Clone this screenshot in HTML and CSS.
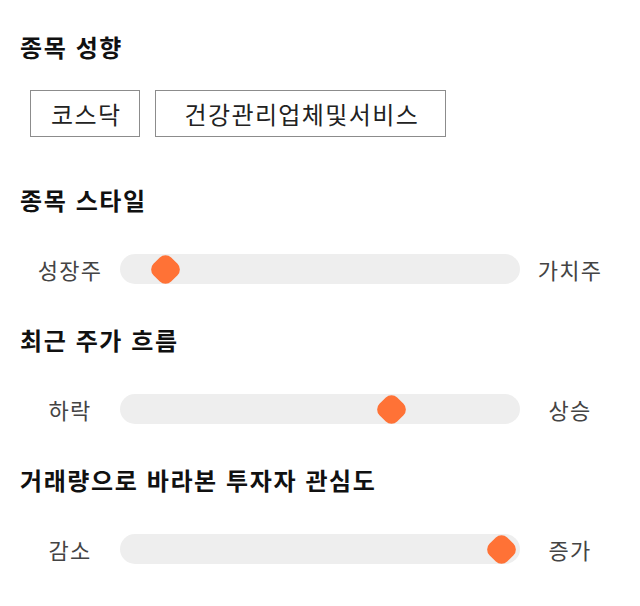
FILE: index.html
```html
<!DOCTYPE html>
<html lang="ko">
<head>
<meta charset="utf-8">
<link rel="stylesheet" href="styles.css">
</head>
<body>
<main class="page">
  <section class="block">
    <h2 class="title">종목 성향</h2>
    <div class="tags">
      <span class="tag">코스닥</span>
      <span class="tag tag-wide">건강관리업체및서비스</span>
    </div>
  </section>
  <section class="block block-after-tags">
    <h2 class="title">종목 스타일</h2>
    <div class="slider-row">
      <span class="label">성장주</span>
      <div class="track"><span class="thumb" style="left: 11.25%"></span></div>
      <span class="label">가치주</span>
    </div>
  </section>
  <section class="block">
    <h2 class="title">최근 주가 흐름</h2>
    <div class="slider-row">
      <span class="label">하락</span>
      <div class="track"><span class="thumb" style="left: 67.75%"></span></div>
      <span class="label">상승</span>
    </div>
  </section>
  <section class="block">
    <h2 class="title">거래량으로 바라본 투자자 관심도</h2>
    <div class="slider-row">
      <span class="label">감소</span>
      <div class="track"><span class="thumb" style="left: 95.4%"></span></div>
      <span class="label">증가</span>
    </div>
  </section>
</main>
</body>
</html>
```

FILE: styles.css
```css
html, body {
  margin: 0;
  padding: 0;
  background: #ffffff;
}
body {
  font-family: "Noto Sans CJK KR", "Noto Sans", sans-serif;
  color: #111;
}
.page {
  padding: 31px 20px 0;
  display: flex;
  flex-direction: column;
}
.block {
  display: flex;
  flex-direction: column;
}
.block + .block {
  margin-top: 40px;
}
.block + .block-after-tags {
  margin-top: 47px;
}
.title {
  margin: 0;
  font-size: 24px;
  line-height: 32px;
  font-weight: 700;
  letter-spacing: 1.6px;
  color: #111;
}
.tags {
  display: flex;
  gap: 15px;
  margin: 27px 0 0 10px;
}
.tag {
  border: 1px solid #8c8c8c;
  padding: 0 18px 0 20px;
  height: 45px;
  line-height: 45px;
  font-size: 24px;
  letter-spacing: 1.4px;
  color: #222;
}
.tag-wide {
  padding: 0 26px 0 28px;
}
.slider-row {
  display: flex;
  align-items: center;
  margin-top: 38px;
  height: 30px;
}
.label {
  width: 100px;
  text-align: center;
  font-size: 22px;
  letter-spacing: 1.3px;
  color: #444;
}
.track {
  position: relative;
  flex: 1;
  height: 30px;
  border-radius: 15px;
  background: #eeeeee;
}
.thumb {
  position: absolute;
  top: 50%;
  width: 25px;
  height: 25px;
  margin: -12.5px 0 0 -12.5px;
  border-radius: 8px;
  background: #ff7236;
  transform: rotate(45deg);
}
```
